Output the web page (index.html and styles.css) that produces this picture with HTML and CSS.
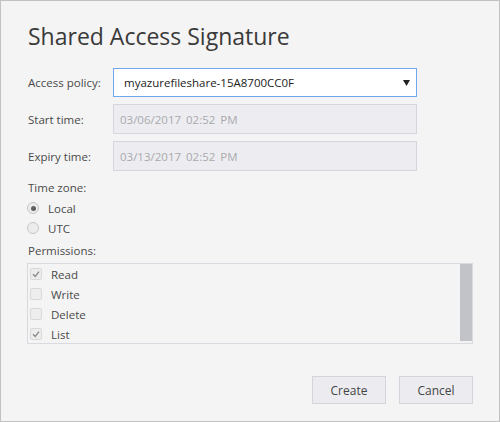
FILE: index.html
```html
<!DOCTYPE html>
<html lang="en">
<head>
    <meta charset="UTF-8">
    <title>Shared Access Signature</title>
    <link rel="stylesheet" href="styles.css">
</head>
<body>
    <div class="dialog">
        <h1>Shared Access Signature</h1>

        <div class="field field-first">
            <label>Access policy:</label>
            <div class="select">
                <span>myazurefileshare-15A8700CC0F</span>
                <svg class="arrow" width="7" height="6" viewBox="0 0 7 6"><polygon points="0,0 7,0 3.5,6" fill="#222"/></svg>
            </div>
        </div>

        <div class="field">
            <label>Start time:</label>
            <div class="input">03/06/2017 02:52 PM</div>
        </div>

        <div class="field">
            <label>Expiry time:</label>
            <div class="input">03/13/2017 02:52 PM</div>
        </div>

        <div class="caption caption-zone">Time zone:</div>
        <div class="option">
            <span class="radio checked"></span>
            <span>Local</span>
        </div>
        <div class="option">
            <span class="radio"></span>
            <span>UTC</span>
        </div>

        <div class="caption caption-perm">Permissions:</div>
        <div class="perm-box">
            <div class="perm-list">
                <div class="perm">
                    <span class="check checked"><svg width="10" height="10" viewBox="0 0 10 10"><path d="M2 5.2 L4.2 7.4 L8 2.6" fill="none" stroke="#8a8a8a" stroke-width="1.4"/></svg></span>
                    <span>Read</span>
                </div>
                <div class="perm">
                    <span class="check"></span>
                    <span>Write</span>
                </div>
                <div class="perm">
                    <span class="check"></span>
                    <span>Delete</span>
                </div>
                <div class="perm">
                    <span class="check checked"><svg width="10" height="10" viewBox="0 0 10 10"><path d="M2 5.2 L4.2 7.4 L8 2.6" fill="none" stroke="#8a8a8a" stroke-width="1.4"/></svg></span>
                    <span>List</span>
                </div>
            </div>
            <div class="scrollbar"></div>
        </div>

        <div class="buttons">
            <button>Create</button>
            <button>Cancel</button>
        </div>
    </div>
</body>
</html>
```

FILE: styles.css
```css
body {
    margin: 0;
    font-family: "Open Sans", "Noto Sans", sans-serif;
    font-size: 11.5px;
    color: #4a4a4a;
}

.dialog {
    width: 500px;
    height: 422px;
    box-sizing: border-box;
    border: 1px solid #c2c2c2;
    background-color: #f4f4f4;
    padding: 19px 26px 0 26px;
}

h1 {
    margin: 0 0 0 1px;
    font-size: 23px;
    line-height: 32px;
    font-weight: normal;
    color: #3a3a3a;
}

.field {
    display: grid;
    grid-template-columns: 86px 304px;
    align-items: center;
    margin-top: 7px;
}

.field-first {
    margin-top: 16px;
}

.field label {
    padding-left: 1px;
}

.select {
    height: 29px;
    box-sizing: border-box;
    border: 1px solid #6ea8ef;
    background-color: #fff;
    display: flex;
    align-items: center;
    justify-content: space-between;
    padding: 0 6px 0 10px;
    color: #222;
}

.input {
    height: 30px;
    box-sizing: border-box;
    border: 1px solid #d6d6de;
    background-color: #ededf1;
    display: flex;
    align-items: center;
    padding-left: 6px;
    color: #a9a9ad;
    word-spacing: 2px;
}

.caption {
    line-height: 16px;
    padding-left: 1px;
}

.caption-zone {
    margin-top: 9px;
}

.caption-perm {
    margin-top: 5px;
}

.option {
    display: flex;
    align-items: center;
    gap: 9px;
    height: 20px;
    margin-top: 2px;
}

.option + .option {
    margin-top: 0;
}

.radio {
    width: 12px;
    height: 12px;
    box-sizing: border-box;
    border: 1px solid #c6c6c6;
    border-radius: 50%;
    background-color: #ececec;
    display: flex;
    align-items: center;
    justify-content: center;
}

.radio.checked::after {
    content: "";
    width: 5px;
    height: 5px;
    border-radius: 50%;
    background-color: #606060;
}

.perm-box {
    margin-top: 4px;
    height: 81px;
    box-sizing: border-box;
    border: 1px solid #d9d9e0;
    display: flex;
}

.perm-list {
    flex: 1;
    padding-left: 2px;
}

.perm {
    display: flex;
    align-items: center;
    gap: 9px;
    height: 20px;
}

.check {
    width: 12px;
    height: 12px;
    box-sizing: border-box;
    border: 1px solid #d8d8d8;
    border-radius: 2px;
    background-color: #ededed;
    display: flex;
    align-items: center;
    justify-content: center;
}

.scrollbar {
    width: 12px;
    margin-bottom: 2px;
    background-color: #c2c3c9;
}

.buttons {
    display: flex;
    justify-content: flex-end;
    gap: 13px;
    margin-top: 32px;
}

button {
    width: 74px;
    height: 28px;
    border: 1px solid #d4d4dc;
    background-color: #ebebf0;
    font-family: inherit;
    font-size: 12px;
    color: #444;
    padding: 0;
}
```
